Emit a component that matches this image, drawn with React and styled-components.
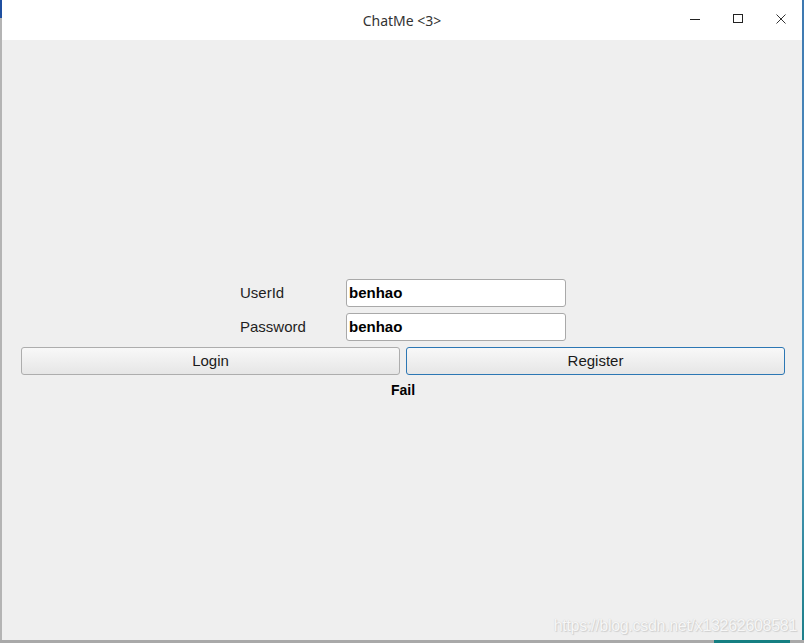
import styled, { createGlobalStyle } from 'styled-components';

const GlobalStyle = createGlobalStyle`
  html, body {
    margin: 0;
    padding: 0;
    background: #a9a9a9;
    overflow: hidden;
  }
  #root {
    width: 804px;
    height: 643px;
  }
`;

export default function App() {
  return (
    <>
      <GlobalStyle />
      <Desktop>
        <LeftStrip />
        <Window>
          <TitleBar>
            <Title>ChatMe &lt;3&gt;</Title>
            <Controls>
              <CtrlButton aria-label="minimize">
                <svg width="12" height="12" viewBox="0 0 12 12">
                  <path d="M1 6.5h10" stroke="#222" strokeWidth="1" />
                </svg>
              </CtrlButton>
              <CtrlButton aria-label="maximize">
                <svg width="12" height="12" viewBox="0 0 12 12">
                  <rect x="1.5" y="1.5" width="9" height="8" fill="none" stroke="#222" strokeWidth="1" />
                </svg>
              </CtrlButton>
              <CtrlButton aria-label="close">
                <svg width="12" height="12" viewBox="0 0 12 12">
                  <path d="M1.5 1.5l9 9M10.5 1.5l-9 9" stroke="#333" strokeWidth="1" />
                </svg>
              </CtrlButton>
            </Controls>
          </TitleBar>
          <Content>
            <Form>
              <FieldRow>
                <Label>UserId</Label>
                <Input defaultValue="benhao" />
              </FieldRow>
              <FieldRow>
                <Label>Password</Label>
                <Input defaultValue="benhao" />
              </FieldRow>
              <ButtonRow>
                <Button>Login</Button>
                <Button $focused>Register</Button>
              </ButtonRow>
              <Status>Fail</Status>
            </Form>
            <Watermark>https://blog.csdn.net/x13262608581</Watermark>
          </Content>
        </Window>
        <RightStrip />
      </Desktop>
      <Taskbar>
        <TaskItem />
      </Taskbar>
    </>
  );
}

const Desktop = styled.div`
  display: flex;
  height: 640px;
`;

const LeftStrip = styled.div`
  width: 2px;
  background: linear-gradient(#1f4fa0 0, #1f4fa0 18px, #b4b4b4 18px);
`;

const RightStrip = styled.div`
  width: 2px;
  background: linear-gradient(#3d78b0, #5a9ec8 60%, #1d7f8a);
`;

const Window = styled.div`
  flex: 1;
  display: flex;
  flex-direction: column;
  background: #efefef;
`;

const TitleBar = styled.div`
  position: relative;
  height: 40px;
  background: #ffffff;
  display: flex;
  align-items: center;
  justify-content: center;
`;

const Title = styled.div`
  font-family: "Noto Sans", sans-serif;
  font-size: 14px;
  color: #333333;
  padding-top: 1px;
`;

const Controls = styled.div`
  position: absolute;
  right: 0;
  top: 0;
  height: 100%;
  display: flex;
`;

const CtrlButton = styled.div`
  width: 43px;
  height: 38px;
  display: flex;
  align-items: center;
  justify-content: center;
  &:first-child {
    padding-left: 3px;
  }
`;

const Content = styled.div`
  position: relative;
  flex: 1;
  display: flex;
  align-items: center;
  padding: 0 17px 0 19px;
`;

const Form = styled.div`
  flex: 1;
  display: flex;
  flex-direction: column;
  align-items: center;
  gap: 6px;
  margin-top: -4px;
`;

const FieldRow = styled.div`
  display: grid;
  grid-template-columns: 106px 220px;
  align-items: center;
`;

const Label = styled.span`
  font-family: "Liberation Sans", Arial, sans-serif;
  font-size: 15px;
  color: #1e1e1e;
  margin-top: -1px;
`;

const Input = styled.input`
  box-sizing: border-box;
  height: 28px;
  width: 220px;
  border: 1px solid #a9a9a9;
  border-radius: 3px;
  background: #ffffff;
  padding: 0 2px;
  font-family: "Liberation Sans", Arial, sans-serif;
  font-size: 15px;
  font-weight: bold;
  color: #000000;
  outline: none;
`;

const ButtonRow = styled.div`
  align-self: stretch;
  display: grid;
  grid-template-columns: 1fr 1fr;
  gap: 6px;
`;

const Button = styled.button`
  box-sizing: border-box;
  height: 28px;
  border: 1px solid ${(p) => (p.$focused ? '#2c77b4' : '#adadad')};
  border-radius: 3px;
  background: linear-gradient(#f8f8f8, #e6e6e6);
  font-family: "Liberation Sans", Arial, sans-serif;
  font-size: 15px;
  color: #1a1a1a;
  padding: 0;
`;

const Status = styled.div`
  font-family: "Liberation Sans", Arial, sans-serif;
  font-size: 14px;
  font-weight: bold;
  color: #000000;
  margin-top: 1px;
`;

const Watermark = styled.div`
  position: absolute;
  right: 5px;
  bottom: 5px;
  font-family: "Liberation Sans", Arial, sans-serif;
  font-size: 16px;
  letter-spacing: -0.3px;
  color: #f7f7f7;
  text-shadow: 0 0 1px #c8c8c8, 1px 1px 1px #d0d0d0;
`;

const Taskbar = styled.div`
  height: 3px;
  background: #a9a9a9;
  display: flex;
`;

const TaskItem = styled.div`
  margin-left: 714px;
  width: 76px;
  background: #157f82;
`;
